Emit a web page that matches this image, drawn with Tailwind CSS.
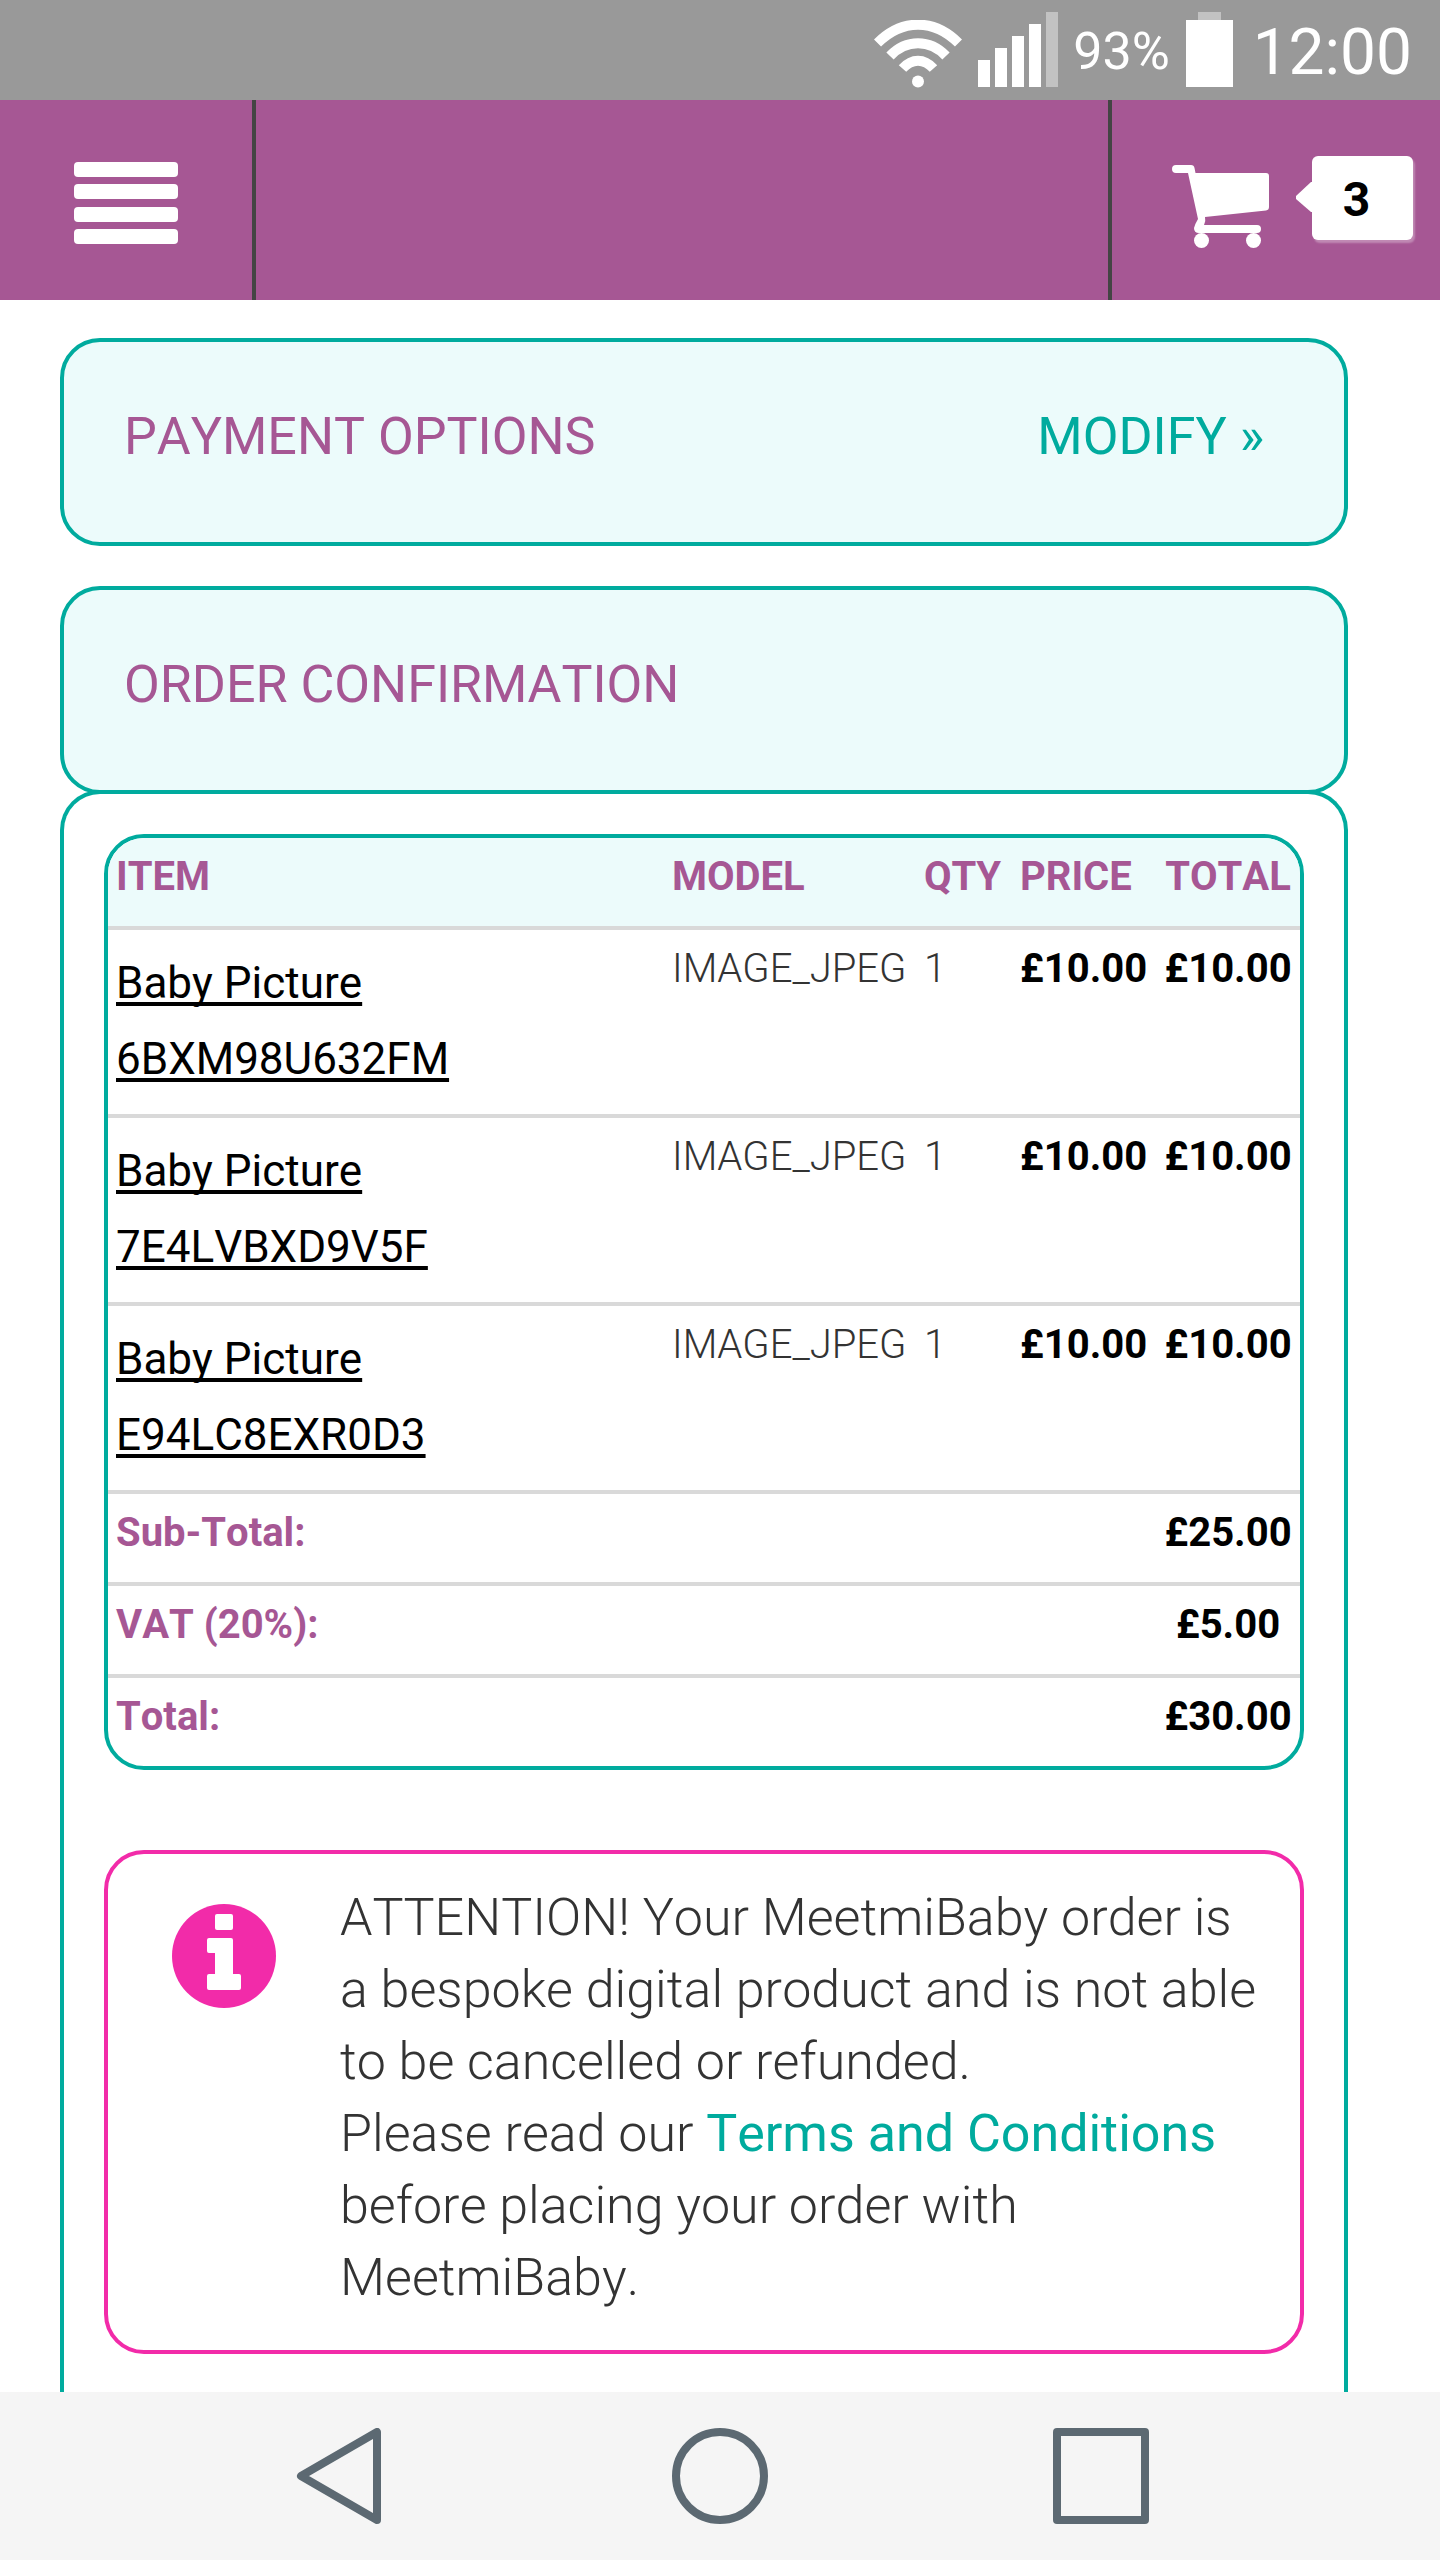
<!DOCTYPE html>
<html lang="en-GB">
<head>
    <meta charset="UTF-8">
    <meta name="viewport" content="width=device-width, initial-scale=1.0">
    <title>Order Confirmation - MeetmiBaby</title>
    <script src="https://cdn.jsdelivr.net/npm/@tailwindcss/browser@4"></script>
</head>
<body class="bg-white text-[#333] font-['Roboto',sans-serif] font-light [font-kerning:none] min-h-screen flex flex-col">

    <!-- Status bar -->
    <div class="h-[100px] bg-[#999] text-white font-normal flex items-start justify-end pr-7">
        <svg class="w-[88px] h-[68px] mt-5" viewBox="0 0 88 68" fill="none" stroke="#fff" stroke-width="10" aria-hidden="true">
            <path d="M3.5 23C28-1.500 60-1.500 84.500 23"/>
            <path d="M16 36C32 19 56 19 72 36"/>
            <path d="M28.500 48.500C38 38 50 38 59.500 48.500"/>
            <circle cx="44" cy="61.500" r="6" fill="#fff" stroke="none"/>
        </svg>
        <svg class="w-20 h-[75px] mt-3 ml-4" viewBox="0 0 80 75" fill="#fff" aria-hidden="true">
            <rect x="0" y="48" width="12" height="27"/>
            <rect x="17" y="36" width="12" height="39"/>
            <rect x="34" y="24" width="12" height="51"/>
            <rect x="51" y="12" width="12" height="63"/>
            <rect x="68" y="0" width="12" height="75" fill="#c2c2c2"/>
        </svg>
        <span class="ml-3 w-[104px] text-[52px] leading-[104px] text-center">93%</span>
        <svg class="w-[47px] h-[75px] mt-3 ml-3" viewBox="0 0 47 75" fill="#fff" aria-hidden="true">
            <rect x="12" y="0" width="23" height="8" fill="#c2c2c2"/>
            <rect x="0" y="8" width="47" height="67"/>
        </svg>
        <span class="ml-5 text-[64px] leading-[106px]">12:00</span>
    </div>

    <!-- Header -->
    <header class="h-[200px] bg-[#a65794] flex">
        <button type="button" aria-label="Menu" class="w-64 pl-[74px] pt-1.5 border-r-4 border-[#444]">
            <svg class="w-[104px] h-[82px]" viewBox="0 0 104 82" fill="#fff">
                <rect x="0" y="0" width="104" height="15" rx="4"/>
                <rect x="0" y="22" width="104" height="15" rx="4"/>
                <rect x="0" y="45" width="104" height="15" rx="4"/>
                <rect x="0" y="67" width="104" height="15" rx="4"/>
            </svg>
        </button>
        <a href="#" aria-label="Cart" class="ml-auto w-[332px] pl-[60px] border-l-4 border-[#444] flex items-start">
            <svg class="w-[98px] h-[83px] mt-[65px]" viewBox="0 0 98 83" fill="#fff">
                <path d="M4 0H19Q22 0 22.500 3L23.500 8H94Q97 8 97 11V42Q97 45 94 45.500L33 52Q34 56 32 60H85Q89 60 89 64Q89 68 85 68H27Q22 68 22 63Q23 59 26 54L16 8H4Q0 8 0 4Q0 0 4 0Z"/>
                <circle cx="29.500" cy="75.500" r="7.500"/>
                <circle cx="81.500" cy="75.500" r="7.500"/>
            </svg>
            <span class="flex items-center mt-14 ml-[26px]">
                <svg class="w-4 h-8" viewBox="0 0 16 32" fill="#fff"><path d="M0 14L15 0H16V30H15L0 17Z"/></svg>
                <span class="w-[101px] h-[84px] bg-white rounded-md shadow-[2px_3px_2px_rgba(255,255,255,0.3)] text-black text-5xl font-bold leading-[88px] text-center pr-3">3</span>
            </span>
        </a>
    </header>

    <main class="flex-1 flex flex-col pl-[60px] pr-[92px] pt-[38px]">
        <section class="flex justify-between border-4 border-[#00ab9e] rounded-[40px] bg-[#ecfbfb] px-[60px] pt-[59px] pb-[69px] text-[52px] leading-[72px] font-normal">
            <h2 class="text-[#a65794]">PAYMENT OPTIONS</h2>
            <a href="#" class="text-[#00ab9e] pr-5">MODIFY »</a>
        </section>

        <section class="mt-10 border-4 border-[#00ab9e] rounded-[40px] bg-[#ecfbfb] px-[60px] pt-[59px] pb-[69px] text-[52px] leading-[72px] font-normal">
            <h2 class="text-[#a65794]">ORDER CONFIRMATION</h2>
        </section>

        <section class="flex-1 -mt-1 border-4 border-b-0 border-[#00ab9e] rounded-t-[40px] px-10 pt-10 pb-[38px]">
            <div class="border-4 border-[#00ab9e] rounded-[40px] overflow-hidden">
                <table class="w-full table-fixed text-[40px] leading-[62px] text-left">
                    <colgroup>
                        <col>
                        <col class="w-[252px]">
                        <col class="w-24">
                        <col class="w-36">
                        <col class="w-36">
                    </colgroup>
                    <thead class="bg-[#ecfbfb] text-[#a65794]">
                        <tr class="border-b-4 border-[#d9d9d9]">
                            <th class="pl-2 pt-2 pb-[18px]">ITEM</th>
                            <th class="pl-2 pt-2 pb-[18px]">MODEL</th>
                            <th class="pl-2 pt-2 pb-[18px]">QTY</th>
                            <th class="pl-2 pt-2 pb-[18px]">PRICE</th>
                            <th class="px-2 pt-2 pb-[18px] text-center">TOTAL</th>
                        </tr>
                    </thead>
                    <tbody class="align-top">
                        <tr class="border-b-4 border-[#d9d9d9]">
                            <td class="pl-2 pt-[15px] pb-[17px] text-[44px] leading-[76px]"><a href="#" class="font-normal text-black underline decoration-4 underline-offset-4 [text-decoration-skip-ink:none]">Baby Picture<br>6BXM98U632FM</a></td>
                            <td class="pl-2 pt-2">IMAGE_JPEG</td>
                            <td class="pl-2 pt-2">1</td>
                            <td class="pl-2 pt-2 font-bold text-black">£10.00</td>
                            <td class="px-2 pt-2 font-bold text-black text-center">£10.00</td>
                        </tr>
                        <tr class="border-b-4 border-[#d9d9d9]">
                            <td class="pl-2 pt-[15px] pb-[17px] text-[44px] leading-[76px]"><a href="#" class="font-normal text-black underline decoration-4 underline-offset-4 [text-decoration-skip-ink:none]">Baby Picture<br>7E4LVBXD9V5F</a></td>
                            <td class="pl-2 pt-2">IMAGE_JPEG</td>
                            <td class="pl-2 pt-2">1</td>
                            <td class="pl-2 pt-2 font-bold text-black">£10.00</td>
                            <td class="px-2 pt-2 font-bold text-black text-center">£10.00</td>
                        </tr>
                        <tr class="border-b-4 border-[#d9d9d9]">
                            <td class="pl-2 pt-[15px] pb-[17px] text-[44px] leading-[76px]"><a href="#" class="font-normal text-black underline decoration-4 underline-offset-4 [text-decoration-skip-ink:none]">Baby Picture<br>E94LC8EXR0D3</a></td>
                            <td class="pl-2 pt-2">IMAGE_JPEG</td>
                            <td class="pl-2 pt-2">1</td>
                            <td class="pl-2 pt-2 font-bold text-black">£10.00</td>
                            <td class="px-2 pt-2 font-bold text-black text-center">£10.00</td>
                        </tr>
                    </tbody>
                    <tfoot class="font-bold">
                        <tr class="border-b-4 border-[#d9d9d9]">
                            <th colspan="4" class="pl-2 pt-2 pb-[18px] text-[#a65794]">Sub-Total:</th>
                            <td class="px-2 pt-2 pb-[18px] text-black text-center">£25.00</td>
                        </tr>
                        <tr class="border-b-4 border-[#d9d9d9]">
                            <th colspan="4" class="pl-2 pt-2 pb-[18px] text-[#a65794]">VAT (20%):</th>
                            <td class="px-2 pt-2 pb-[18px] text-black text-center">£5.00</td>
                        </tr>
                        <tr>
                            <th colspan="4" class="pl-2 pt-2 pb-[18px] text-[#a65794]">Total:</th>
                            <td class="px-2 pt-2 pb-[18px] text-black text-center">£30.00</td>
                        </tr>
                    </tfoot>
                </table>
            </div>

            <div class="mt-20 border-4 border-[#f22ba9] rounded-[40px] flex items-start pl-16 pr-8 pt-7 pb-9">
                <svg class="w-[104px] h-[104px] mt-[22px] shrink-0" viewBox="0 0 104 104" aria-hidden="true">
                    <circle cx="52" cy="52" r="52" fill="#f22ba9"/>
                    <rect x="43" y="10" width="18" height="16" rx="2" fill="#fff"/>
                    <path d="M37 34H59Q61 34 61 36V70H67Q69 70 69 72V84Q69 86 67 86H37Q35 86 35 84V72Q35 70 37 70H43V49H37Q35 49 35 47V36Q35 34 37 34Z" fill="#fff"/>
                </svg>
                <p class="ml-16 text-[52px] leading-[72px]">ATTENTION! Your MeetmiBaby order is a bespoke digital product and is not able to be cancelled or refunded.<br>Please read our <a href="#" class="font-normal text-[#00ab9e]">Terms and Conditions</a> before placing your order with MeetmiBaby.</p>
            </div>
        </section>
    </main>

    <!-- Navigation keys -->
    <nav class="h-[168px] bg-[#f5f5f5] flex items-center justify-center gap-[285px]">
        <button type="button" aria-label="Back">
            <svg class="w-24 h-24" viewBox="0 0 96 96" fill="none" stroke="#5c6972" stroke-width="8" stroke-linejoin="round"><path d="M86 4V92L10 48Z"/></svg>
        </button>
        <button type="button" aria-label="Home">
            <svg class="w-24 h-24" viewBox="0 0 96 96" fill="none" stroke="#5c6972" stroke-width="8"><circle cx="48" cy="48" r="44"/></svg>
        </button>
        <button type="button" aria-label="Recent apps">
            <svg class="w-24 h-24" viewBox="0 0 96 96" fill="none" stroke="#5c6972" stroke-width="8" stroke-linejoin="round"><rect x="4" y="4" width="88" height="88"/></svg>
        </button>
    </nav>

</body>
</html>
